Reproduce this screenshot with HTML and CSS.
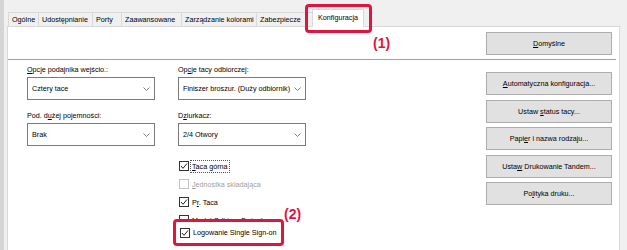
FILE: index.html
```html
<!DOCTYPE html>
<html lang="pl">
<head>
<meta charset="utf-8">
<title>Konfiguracja</title>
<link rel="stylesheet" href="styles.css">
</head>
<body>
<div class="window">
  <div class="edge"></div>
  <div class="edge-gap"></div>
  <div class="content">
    <div class="tabs">
      <div class="tab w30">Ogólne</div>
      <div class="tab w54">Udostępnianie</div>
      <div class="tab w29">Porty</div>
      <div class="tab w60">Zaawansowane</div>
      <div class="tab w75">Zarządzanie kolorami</div>
      <div class="tab w56">Zabezpiecze</div>
      <div class="tab active">Konfiguracja</div>
    </div>
    <div class="panel">
      <div class="top-row">
        <div class="btn"><span><u>D</u>omyślne</span></div>
      </div>
      <div class="sep"></div>
      <div class="main">
        <div class="left">
          <div class="field">
            <div class="lbl"><u>O</u>pcje podajnika wejścio.:</div>
            <div class="select"><span>Cztery tace</span><svg width="7" height="4" viewBox="0 0 7 4"><polyline points="0.5,0.5 3.5,3.5 6.5,0.5" fill="none" stroke="#808080" stroke-width="1"/></svg></div>
          </div>
          <div class="field">
            <div class="lbl">Op<u>c</u>je tacy odbiorczej:</div>
            <div class="select"><span>Finiszer broszur. (Duży odbiornik)</span><svg width="7" height="4" viewBox="0 0 7 4"><polyline points="0.5,0.5 3.5,3.5 6.5,0.5" fill="none" stroke="#808080" stroke-width="1"/></svg></div>
          </div>
          <div class="field">
            <div class="lbl">Pod. d<u>u</u>żej pojemności:</div>
            <div class="select"><span>Brak</span><svg width="7" height="4" viewBox="0 0 7 4"><polyline points="0.5,0.5 3.5,3.5 6.5,0.5" fill="none" stroke="#808080" stroke-width="1"/></svg></div>
          </div>
          <div class="field">
            <div class="lbl">D<u>z</u>iurkacz:</div>
            <div class="select"><span>2/4 Otwory</span><svg width="7" height="4" viewBox="0 0 7 4"><polyline points="0.5,0.5 3.5,3.5 6.5,0.5" fill="none" stroke="#808080" stroke-width="1"/></svg></div>
          </div>
          <div class="checks">
            <div class="check"><span class="cb on"><svg width="8" height="8" viewBox="0 0 8 8"><polyline points="1,4 3,6.3 7,1.5" fill="none" stroke="#222" stroke-width="1"/></svg></span><span class="focus"><u>T</u>aca górna</span></div>
            <div class="check off"><span class="cb"></span><span><u>J</u>ednostka składająca</span></div>
            <div class="check"><span class="cb on"><svg width="8" height="8" viewBox="0 0 8 8"><polyline points="1,4 3,6.3 7,1.5" fill="none" stroke="#222" stroke-width="1"/></svg></span><span>P<u>r</u>. Taca</span></div>
            <div class="check"><span class="cb"></span><span>Moduł Odbioru Dużych</span></div>
          </div>
        </div>
        <div class="right">
          <div class="btn"><span><u>A</u>utomatyczna konfiguracja...</span></div>
          <div class="btn"><span>Ustaw <u>s</u>tatus tacy...</span></div>
          <div class="btn"><span>Papi<u>e</u>r i nazwa rodzaju...</span></div>
          <div class="btn"><span>Usta<u>w</u> Drukowanie Tandem...</span></div>
          <div class="btn"><span>Po<u>l</u>ityka druku...</span></div>
        </div>
      </div>
    </div>
  </div>
  <div class="edge-right"></div>

  <div class="callout callout-tab"></div>
  <div class="num num1">(1)</div>
  <div class="callout callout-sso">
    <div class="check"><span class="cb on"><svg width="8" height="8" viewBox="0 0 8 8"><polyline points="1,4 3,6.3 7,1.5" fill="none" stroke="#222" stroke-width="1"/></svg></span><span>Logowanie Single Sign-on</span></div>
  </div>
  <div class="num num2">(2)</div>
</div>
</body>
</html>
```

FILE: styles.css
```css
* { box-sizing: border-box; }

html, body {
  margin: 0;
  padding: 0;
}

body {
  width: 627px;
  height: 250px;
  overflow: hidden;
  background: #f0f0f0;
  font-family: "Liberation Sans", Arial, sans-serif;
  font-size: 7.2px;
  color: #000;
}

u { text-decoration: underline; text-underline-offset: 1px; }

.window {
  position: relative;
  display: flex;
  height: 250px;
}

.edge {
  width: 4px;
  background: #d5d5d5;
}

.edge-gap {
  width: 3px;
  background: #f0f0f0;
}

.edge-right {
  width: 7px;
  background: #f0f0f0;
}

.content {
  width: 613px;
  display: flex;
  flex-direction: column;
  padding-top: 12px;
}

.tabs {
  display: flex;
  align-items: flex-end;
  height: 14px;
  padding-left: 1px;
}

.tab {
  height: 14px;
  border: 1px solid #d9d9d9;
  border-bottom: none;
  border-right: none;
  background: #f0f0f0;
  display: flex;
  align-items: center;
  padding-left: 3px;
  white-space: nowrap;
  overflow: hidden;
  line-height: 10px;
}

.w30 { width: 30px; }
.w54 { width: 54px; }
.w29 { width: 29px; }
.w60 { width: 60px; }
.w75 { width: 75px; }
.w56 { width: 56px; }

.tab.active {
  width: 52px;
  height: 18px;
  margin-bottom: -1px;
  background: #fff;
  border-right: 1px solid #d9d9d9;
  justify-content: center;
  padding: 0 0 2px 0;
  position: relative;
  z-index: 1;
}

.panel {
  flex: 1;
  background: #fff;
  border: 1px solid #d9d9d9;
  border-bottom: none;
}

.top-row {
  display: flex;
  justify-content: flex-end;
  padding: 5px 7px 0 0;
}

.btn {
  width: 126px;
  height: 23px;
  background: #e1e1e1;
  border: 1px solid #adadad;
  display: flex;
  align-items: center;
  justify-content: center;
  white-space: nowrap;
}

.sep {
  height: 1px;
  background: #a0a0a0;
  margin: 4px 3px 0 0;
}

.main {
  display: flex;
  justify-content: space-between;
  padding: 5px 7px 0 19px;
}

.left {
  display: grid;
  grid-template-columns: 128px 128px;
  column-gap: 23px;
  row-gap: 11px;
  align-content: start;
}

.lbl {
  height: 10px;
  line-height: 10px;
  white-space: nowrap;
}

.select {
  margin-top: 2px;
  height: 23px;
  border: 1px solid #7a7a7a;
  background: #fff;
  display: flex;
  align-items: center;
  justify-content: space-between;
  padding: 0 4px 0 4px;
  white-space: nowrap;
}

.checks {
  grid-column: 2;
  margin-top: 0;
  display: flex;
  flex-direction: column;
}

.check {
  height: 18px;
  display: flex;
  align-items: center;
  white-space: nowrap;
}

.cb {
  width: 10px;
  height: 10px;
  margin-left: 1px;
  margin-right: 3px;
  border: 1px solid #333;
  background: #fff;
  display: flex;
  align-items: center;
  justify-content: center;
  flex: none;
}

.check.off { color: #a0a0a0; }
.check.off .cb { border-color: #c4c4c4; }

.focus {
  outline: 1px dotted #555;
  outline-offset: 1px;
}

.right {
  display: flex;
  flex-direction: column;
  gap: 4.5px;
  margin-top: 7px;
}

/* callouts */
.callout {
  position: absolute;
  border: 3px solid #e0143c;
  border-radius: 4px;
}

.callout-tab {
  left: 305px;
  top: 4px;
  width: 67px;
  height: 29px;
  z-index: 2;
}

.callout-sso {
  left: 173px;
  top: 219px;
  width: 111px;
  height: 27px;
  background: #fff;
  padding-left: 3px;
  display: flex;
  align-items: center;
  z-index: 2;
}

.callout-sso .check { height: 21px; }

.num {
  position: absolute;
  color: #e0143c;
  font-weight: bold;
  font-size: 14px;
  line-height: 14px;
  z-index: 3;
}

.num1 { left: 373px; top: 36px; }
.num2 { left: 284px; top: 207px; }
```
